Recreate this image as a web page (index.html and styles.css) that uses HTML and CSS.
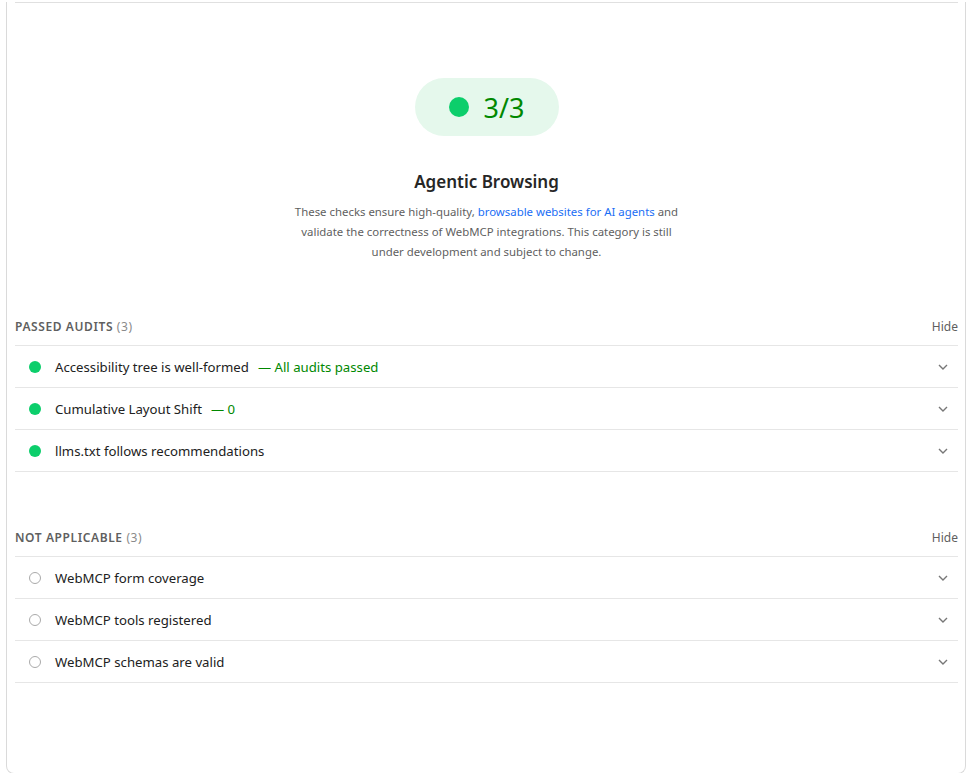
FILE: index.html
```html
<!DOCTYPE html>
<html lang="en">
<head>
<meta charset="UTF-8" />
<meta name="viewport" content="width=device-width, initial-scale=1.0"/>
<title>Agentic Browsing</title>
<link rel="stylesheet" href="styles.css">
</head>
<body>
<div class="card">
  <div class="top-rule"></div>

  <div class="category-head">
    <div class="gauge">
      <span class="gauge-dot"></span>
      <span class="gauge-score">3/3</span>
    </div>
    <h2 class="category-title">Agentic Browsing</h2>
    <p class="category-desc">These checks ensure high-quality, <a href="#">browsable websites for AI agents</a> and validate the correctness of WebMCP integrations. This category is still under development and subject to change.</p>
  </div>

  <div class="group group-passed">
    <div class="group-header">
      <span class="group-title">Passed audits <span class="group-count">(3)</span></span>
      <span class="group-toggle">Hide</span>
    </div>
    <div class="audit">
      <span class="audit-icon pass"></span>
      <span class="audit-title">Accessibility tree is well-formed</span>
      <span class="audit-value">— All audits passed</span>
      <svg class="chevron" width="10" height="6" viewBox="0 0 10 6"><path d="M1 1l4 4 4-4" fill="none" stroke="#777" stroke-width="1.4"/></svg>
    </div>
    <div class="audit">
      <span class="audit-icon pass"></span>
      <span class="audit-title">Cumulative Layout Shift</span>
      <span class="audit-value">— 0</span>
      <svg class="chevron" width="10" height="6" viewBox="0 0 10 6"><path d="M1 1l4 4 4-4" fill="none" stroke="#777" stroke-width="1.4"/></svg>
    </div>
    <div class="audit">
      <span class="audit-icon pass"></span>
      <span class="audit-title">llms.txt follows recommendations</span>
      <svg class="chevron" width="10" height="6" viewBox="0 0 10 6"><path d="M1 1l4 4 4-4" fill="none" stroke="#777" stroke-width="1.4"/></svg>
    </div>
  </div>

  <div class="group group-na">
    <div class="group-header">
      <span class="group-title">Not applicable <span class="group-count">(3)</span></span>
      <span class="group-toggle">Hide</span>
    </div>
    <div class="audit">
      <span class="audit-icon na"></span>
      <span class="audit-title">WebMCP form coverage</span>
      <svg class="chevron" width="10" height="6" viewBox="0 0 10 6"><path d="M1 1l4 4 4-4" fill="none" stroke="#777" stroke-width="1.4"/></svg>
    </div>
    <div class="audit">
      <span class="audit-icon na"></span>
      <span class="audit-title">WebMCP tools registered</span>
      <svg class="chevron" width="10" height="6" viewBox="0 0 10 6"><path d="M1 1l4 4 4-4" fill="none" stroke="#777" stroke-width="1.4"/></svg>
    </div>
    <div class="audit">
      <span class="audit-icon na"></span>
      <span class="audit-title">WebMCP schemas are valid</span>
      <svg class="chevron" width="10" height="6" viewBox="0 0 10 6"><path d="M1 1l4 4 4-4" fill="none" stroke="#777" stroke-width="1.4"/></svg>
    </div>
  </div>
</div>
</body>
</html>
```

FILE: styles.css
```css
body {
  margin: 0;
  background: #fff;
  font-family: 'Segoe UI', 'Noto Sans', sans-serif;
  color: #212121;
}
.card {
  box-sizing: border-box;
  width: 960px;
  height: 772px;
  margin-left: 6px;
  padding: 0 7px 0 8px;
  border: 1px solid #dadada;
  border-top: none;
  border-radius: 0 0 8px 8px;
}
.top-rule {
  margin-top: 2px;
  border-top: 1px solid #e0e0e0;
}
.category-head {
  display: flex;
  flex-direction: column;
  align-items: center;
  padding-top: 75px;
}
.gauge {
  display: flex;
  align-items: center;
  justify-content: center;
  width: 144px;
  height: 58px;
  border-radius: 29px;
  background: #e5f8ec;
}
.gauge-dot {
  width: 20px;
  height: 20px;
  border-radius: 50%;
  background: #0cce6b;
  margin-right: 15px;
}
.gauge-score {
  font-size: 27px;
  color: #008800;
}
.category-title {
  margin: 34px 0 0;
  font-size: 17px;
  line-height: 24px;
  font-weight: 600;
  color: #262626;
}
.category-desc {
  margin: 8px 0 0;
  width: 395px;
  font-size: 11.4px;
  line-height: 20px;
  text-align: center;
  color: #5f5f5f;
}
.category-desc a {
  color: #1a6ef5;
  text-decoration: none;
}
.group-passed {
  margin-top: 55px;
}
.group-na {
  margin-top: 56px;
}
.group-header {
  display: flex;
  justify-content: space-between;
  padding-bottom: 8px;
  line-height: 20px;
  font-size: 12px;
  border-bottom: 1px solid #e6e6e6;
  color: #5f5f5f;
}
.group-title {
  font-weight: 600;
  text-transform: uppercase;
  letter-spacing: 0.6px;
}
.group-count {
  font-weight: 400;
  color: #8a8a8a;
}
.audit {
  display: flex;
  align-items: center;
  height: 41px;
  padding: 0 10px 0 14px;
  border-bottom: 1px solid #e6e6e6;
  font-size: 13.2px;
}
.audit-icon {
  box-sizing: border-box;
  width: 12px;
  height: 12px;
  border-radius: 50%;
  margin-right: 14px;
}
.audit-icon.pass {
  background: #0cce6b;
}
.audit-icon.na {
  border: 1.5px solid #aaa;
}
.audit-value {
  margin-left: 9px;
  color: #008800;
}
.chevron {
  margin-left: auto;
}
```
